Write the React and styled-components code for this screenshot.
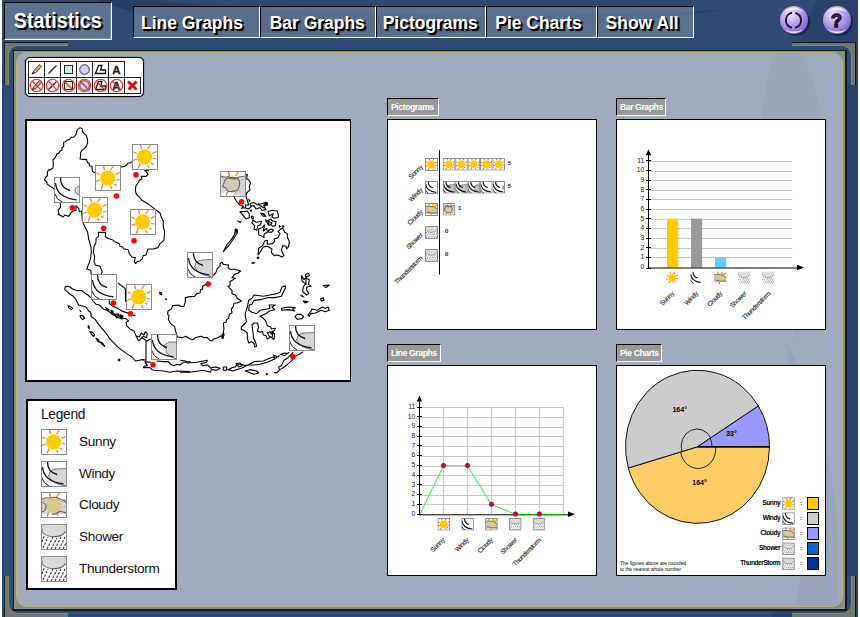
import React from 'react'
import styled, { createGlobalStyle } from 'styled-components'

const GlobalStyle = createGlobalStyle`
    body {
        margin: 0;
        background: #fff;
        font-family: "Liberation Sans", Arial, sans-serif;
        overflow: hidden;
    }
    * { box-sizing: border-box; }
    svg { display: block; }
    svg text { font-family: "Liberation Sans", Arial, sans-serif; }
`

const Page = styled.div`
    position: relative;
    width: 856px;
    height: 617px;
    margin: 0 2px;
    background: #2f4a73;
    overflow: hidden;
`
const Swoosh = styled.svg`
    position: absolute;
    top: 0;
    left: 0;
    pointer-events: none;
`
const Header = styled.div`
    position: relative;
    display: flex;
    height: 50px;
    padding: 2px 5px 0 2px;
`
const Title = styled.div`
    width: 108px;
    height: 38px;
    display: flex;
    align-items: center;
    justify-content: center;
    background: rgba(138, 154, 180, 0.5);
    border: 1px solid #000;
    border-right-color: #fff;
    border-bottom-color: #fff;
    box-shadow: inset -1px -1px 0 rgba(255, 255, 255, 0.15);
`
const Nav = styled.div`
    display: flex;
    height: 32px;
    margin: 4px 0 0 21px;
`
const NavButton = styled.button`
    width: ${(props)=>props.$width}px;
    padding: 1px ${(props)=>props.$pad || 0}px 0 0;
    display: flex;
    align-items: center;
    justify-content: center;
    background: rgba(138, 154, 180, 0.5);
    border: 1px solid #000;
    border-right-color: #fff;
    border-bottom-color: #fff;
`
const HeaderText = styled.span`
    flex: none;
    font: bold ${(props)=>props.$size}px "Liberation Sans", Arial, sans-serif;
    white-space: nowrap;
    color: #fff;
    text-shadow: 1px 1px 0 #000, 2px 2px 0 #000, 2px 2px 1px #000;
    transform: scaleX(${(props)=>props.$squeeze});
`
const RoundButtons = styled.div`
    display: flex;
    gap: 12px;
    margin: 3px 0 0 auto;
`
const Bracket = styled.div`
    position: absolute;
    width: 64px;
    height: 43px;
    ${(props)=>props.$right ? 'right: 2px;' : 'left: 2px;'}
    ${(props)=>props.$bottom ? 'top: 576px;' : 'top: 42px;'}
    border: 0 solid #0d1826;
    border-top-width: ${(props)=>props.$bottom ? 0 : 1}px;
    border-left-width: ${(props)=>props.$right ? 0 : 1}px;
    border-right-width: ${(props)=>props.$right ? 1 : 0}px;
    background: #6f7869;
    overflow: hidden;

    &::after {
        content: '';
        position: absolute;
        width: 80px;
        height: 60px;
        ${(props)=>props.$right ? 'right: 3px;' : 'left: 3px;'}
        ${(props)=>props.$bottom ? 'bottom: 5px;' : 'top: 2px;'}
        border: 1px solid #858f5e;
        border-radius: 10px;
        background: #2f4a73;
    }
`
const Frame = styled.div`
    position: relative;
    width: 834px;
    height: 561px;
    margin-left: 11px;
    padding: 1px 2px 2px;
    background: #8a8f80;
    border: 1px solid #101a28;
    border-right-width: 2px;
    border-bottom-width: 2px;
`
const Board = styled.div`
    position: relative;
    display: grid;
    grid-template-columns: 326px 209px 210px;
    height: 100%;
    padding: 4px 0 0 8px;
    background: #a0abbe;
    border: 1px solid #b5b57c;
    border-radius: 11px;
    overflow: hidden;
`
const LeftColumn = styled.div`
    position: relative;
`
const ChartColumn = styled.div`
    position: relative;
    padding-top: 41px;
    margin-left: ${(props)=>props.$offset}px;
    width: 210px;
`
const ChartLabel = styled.div`
    width: ${(props)=>props.$width}px;
    height: 18px;
    padding-left: 3px;
    background: #999;
    border: 1px solid #000;
    border-right-color: #fff;
    border-bottom-color: #fff;
    color: #fff;
    font-size: 8.6px;
    font-weight: bold;
    letter-spacing: -0.4px;
    line-height: 16px;
    white-space: nowrap;
`
const ChartPanel = styled.div`
    height: 211px;
    margin: 3px 0 ${(props)=>props.$last ? 0 : 14}px;
    background: #fff;
    border: 1px solid #000;
`
const ToolBox = styled.div`
    width: 119px;
    height: 40px;
    padding: 3px 2px;
    background: #fff;
    border: 1px solid #000;
    border-radius: 5px;
    box-shadow: 0 0 1px #000;
`
const ToolRow = styled.div`
    display: flex;
    height: 16px;
`
const ToolCell = styled.div`
    width: ${(props)=>props.$end ? 17 : 16}px;
    height: 17px;
    flex: none;
    border: 0 solid #222;
    border-top-width: 1px;
    border-left-width: 1px;
    border-right-width: ${(props)=>props.$end ? 1 : 0}px;
    border-bottom-width: ${(props)=>props.$last ? 1 : 0}px;
`
const MapPanel = styled.div`
    width: 326px;
    height: 263px;
    margin-top: 22px;
    background: #fff;
    border: 2px solid #000;
    border-right-width: 1.5px;
`
const Legend = styled.div`
    width: 151px;
    height: 191px;
    margin: 17px 0 0 1px;
    padding: 4px 0 0 13px;
    background: #fff;
    border: 2px solid #000;
    color: #111;
    line-height: 20px;
`
const LegendItem = styled.div`
    display: flex;
    align-items: center;
    gap: 12px;
    height: 31.8px;
    font-size: 13.6px;
    letter-spacing: -0.35px;
`
const LegendTitle = styled.div`
    height: 21px;
    font-size: 13.8px;
    letter-spacing: -0.3px;
`

const rays = [
    'M9.5 5 L8.5 1', 'M15.5 5 L18.5 1', 'M4.8 9.5 L1.5 8', 'M20.5 9.5 L24.5 7.5',
    'M21 14.5 L24.5 15', 'M5 15 L1 16.5', 'M8.2 19.5 L6 24.5', 'M15.5 21 L17 24', 'M19 19 L21.5 20.5',
]

function Sun({ weight }){
    return (
        <g>
            <path d={rays.join(' ')} stroke="#ff6d12" strokeWidth={1.2 * weight} fill="none" />
            <circle cx="12.7" cy="12.8" r="7.6" fill="#ffcb00" />
        </g>
    );
}

const windClouds = {
    full: 'M26 7.5 L15 8 Q8 9 8.5 13 Q6 15 9 17 Q11 23 26 25 Z',
    half: 'M26 8 L18 8 Q13 10 13 13 Q17 15 15 18 Q18 23 26 25 Z',
    dot: 'M26 9 Q21 10 21 13.5 Q21 17 26 18.5 Z',
}

function Wind({ cloud, weight }){
    return (
        <g fill="none" stroke="#111" strokeWidth={1.3 * weight}>
            {cloud && <path d={windClouds[cloud]} fill={weight > 1 ? '#c4c4c4' : '#d6d6d6'} stroke="#777" strokeWidth={weight} />}
            <path d="M6.5 1 Q6.5 11 16 13.5" />
            <path d="M1.5 6 Q3 21 22.5 22.8" />
            <path d="M1 17 Q2 22 8 25" strokeWidth={weight} />
        </g>
    );
}

const cloudBlob = 'M17 7 Q14 9 9 7 Q5 7 4 12 Q1 16 6 17 Q7 22 13 20 Q18 21 19 16 Q21 10 17 7'

function Cloud({ cloud, weight }){
    if(cloud == 'shifted'){
        return (
            <g>
                <Sun weight={weight} />
                <path d="M0 5 Q5 7 9 5.5 Q16 7 26 5 V25 H20 Q12 22 6 20 Q3 22 0 23 Z" fill="#cbcaca" fillOpacity="0.78" />
                <path d={cloudBlob} fill="#cecab4" />
                <path d={'M1 5 Q4 7 8 5.5 Q14 8 19 6 L25 5 ' + cloudBlob} fill="none" stroke="#666" strokeWidth={1.1 * weight} />
            </g>
        );
    }
    return (
        <g>
            <Sun weight={weight} />
            <path d="M0 8 Q3 5 9 6 Q15 4 19 7 Q24 8 26 12 V22 L19 22 Q14 25 9 21 Q5 23 0 22 Z" fill="#c6c4be" fillOpacity="0.72" />
            <circle cx="13" cy="13" r="7.3" fill="#d8cb8a" />
            <path d="M0 8 Q3 5 9 6 Q15 4 19 7 Q24 8 25 11 M0 10 Q6 12 5 15 Q5 19 0 20 M11 22 Q14 23 19 19 L26 21" fill="none" stroke="#666" strokeWidth={1.1 * weight} />
        </g>
    );
}

// the cloudy icon of the charts, sun in the upper right behind one wide cloud
function SmallCloud(){
    return (
        <g>
            <path d="M9 5 L7 0 M15 5 L17 0 M20 7 L25 3 M3 10 L0 8 M12 21 L11 26" stroke="#ff6d12" strokeWidth="2.4" />
            <path d="M14 3 h8 v6 h-8z" fill="#ffcb00" />
            <path d="M0 7 Q8 5 14 7 Q22 5 26 12 V22 H0 Z" fill="#c3c0b8" />
            <path d="M5 9 Q14 5 20 10 Q25 16 22 20 Q12 22 8 18 Q4 15 5 9 Z" fill="#d9cb8e" />
            <path d="M0 7 Q8 5 14 7 Q20 6 24 13 M4 18 Q12 21 25 20" fill="none" stroke="#666" strokeWidth="1.8" />
        </g>
    );
}

function Rain(){
    return (
        <g>
            <path d="M2 24 L7 13 M6 25 L12 13 M10 25 L16 14 M14 25 L20 13 M18 25 L24 13 M22 25 L26 17 M1 18 L3 12" stroke="#333" strokeWidth="1.1" strokeDasharray="2.5 1.2" fill="none" />
            <path d="M0 0 H26 V8 H24 Q22 12.5 12.5 12.8 Q5 12.5 2 8.5 L0 8 Z" fill="#dadada" />
            <path d="M1 5 V8 Q5 12.5 12.5 12.8 Q22 12.5 24 8 H26" fill="none" stroke="#666" strokeWidth="1.1" />
        </g>
    );
}

function WeatherIcon({ type, cloud, size = 26, x, y, bare }){
    const small = size < 20;
    const weight = small ? 1.8 : 1;
    return (
        <svg x={x} y={y} width={size} height={size} viewBox="0 0 26 26">
            {!bare && <rect width="26" height="26" fill="#fff" />}
            {type == 'sunny' && <Sun weight={weight} />}
            {type == 'windy' && <Wind cloud={cloud} weight={weight} />}
            {type == 'cloudy' && (small && !cloud ? <SmallCloud /> : <Cloud cloud={cloud} weight={weight} />)}
            {type == 'rain' && <Rain />}
            {!bare && <rect x={small ? 1 : 0.5} y={small ? 1 : 0.5} width={small ? 24 : 25} height={small ? 24 : 25} fill="none" stroke="#8c8c8c" strokeWidth={small ? 2 : 1} />}
        </svg>
    );
}

const weather = [
    { name: 'Sunny', type: 'sunny', value: 5 },
    { name: 'Windy', type: 'windy', value: 5, legendCloud: 'full' },
    { name: 'Cloudy', type: 'cloudy', value: 1 },
    { name: 'Shower', type: 'rain', value: 0 },
    { name: 'Thunderstorm', type: 'rain', value: 0 },
]

const tools = {
    pencil: (
        <g>
            <path d="M3 12 L5 8.5 L10.5 2.5 L12.5 4.5 L7 10.5 Z" fill="#d9a378" stroke="#333" strokeWidth="0.9" />
            <path d="M3 12 L5 10.5" stroke="#111" />
        </g>
    ),
    line: <path d="M3.5 11.5 L11.5 3.5" stroke="#222" strokeWidth="1.3" />,
    rect: <rect x="3.5" y="3.5" width="8" height="8" fill="#c9f2c9" stroke="#222" />,
    circle: <circle cx="7.5" cy="7.5" r="4.8" fill="#cfd0ee" stroke="#333" />,
    polygon: <path d="M5.5 3.5 H9 L7.5 8 H12.5 V11.5 H2.5 Z" fill="none" stroke="#111" strokeWidth="1.3" />,
    text: <text x="7.5" y="11.5" fontSize="11.5" fontWeight="bold" textAnchor="middle" fill="#222" stroke="#222" strokeWidth="0.3">A</text>,
}
const toolNames = ['pencil', 'line', 'rect', 'circle', 'polygon', 'text']

function Toolbar(){
    return (
        <ToolBox>
            <ToolRow>
                {toolNames.map((name, i)=>(
                    <ToolCell key={name} $end={i == 5}>
                        <svg width="15" height="15">{tools[name]}</svg>
                    </ToolCell>
                ))}
            </ToolRow>
            <ToolRow>
                {toolNames.map((name)=>(
                    <ToolCell key={name} $last>
                        <svg width="15" height="15">
                            {tools[name]}
                            <circle cx="7.5" cy="7.5" r="6.2" fill="none" stroke="#f22" strokeWidth="1.1" />
                            <path d="M3 3 L12 12" stroke="#f22" strokeWidth="1.1" />
                        </svg>
                    </ToolCell>
                ))}
                <ToolCell $last $end>
                    <svg width="15" height="15">
                        <path d="M3 3.5 L11.5 11.5 M11.5 3.5 L3.5 11.5" stroke="#f00000" strokeWidth="2.8" />
                    </svg>
                </ToolCell>
            </ToolRow>
        </ToolBox>
    );
}

// coast lines, each region has its own origin and is drawn at triple scale
const regions = [
    {
        name: 'indochina', x: 20, y: 115,
        lines: `M180 38 L172 44 168 58 162 66 154 67 148 74 142 75 136 80 131 82 131 94 126 98 126 106 120 108 117 114 110 118 108 124 102 132 99 135 100 150 98 160 90 165 86 164 82 172 82 182 78 186 73 195 80 200 82 208 88 212 100 220 103 225
            M180 38 L188 42 187 48 192 56 198 60 202 70 203 82 200 92 194 100 188 104 182 112 182 122 180 132 192 133 200 134 202 142 208 146 208 152 216 154 217 168 222 172 226 172
            M301 156 L312 155 320 150 324 144 330 144 336 140
            M386 167 L374 167 380 172 384 178 378 184 364 184 366 192 358 196 354 204 348 212 346 226 349 238 358 246 366 256 386 268 406 283 420 294 424 306 430 318 430 336 434 350 432 376 420 386 414 398 400 402 384 402 378 420 370 422 366 432 360 438 352 440 347 446 343 440 346 428 336 426 328 416 324 404 312 402 308 396 300 394 298 386 285 380 276 374 264 370 256 365 257 353 235 352 236 364 228 370 228 382 222 395 220 412 224 424 222 440 226 450 240 454 244 464 247 470 243 480
            M120 262 L122 276 114 286 118 300 114 298 130 306 134 300 146 304 154 292 160 288 168 286 168 272 176 280 178 290 185 288 186 304 188 322 194 334 203 352 206 372 213 396 214 410 212 430 206 448 200 462 212 466 214 478
            M294 504 L304 512 310 516 316 522 317 562 M268 556 L268 566 276 572 292 580 310 590 330 596 M338 600 l8 2`,
    },
    {
        name: 'sumatra', x: 20, y: 245,
        lines: `M136 125 L146 124 158 132 172 137 186 137 194 144 204 150 212 158 M214 162 L228 178 238 180 250 192 266 198 276 208 296 218 306 222 316 220 326 228 318 232 320 242 330 252 342 258 348 272 356 288 M136 125 L134 134 142 140 150 148 160 154 168 164 176 180 192 184 198 186 206 198 212 202 214 215 226 224 236 238 246 250 256 262 262 270 268 280 280 292 292 305 306 316 320 326 336 336 346 348 368 344 378 346 378 288
            M348 272 L358 276 364 264 372 270 376 260 382 266 380 278 370 274 356 288 M364 276 L380 288 392 282
            M374 350 L382 362 372 364 370 368 390 368 396 374 402 376 430 378 450 382 470 378 510 380
            M374 350 L394 352 M410 348 L430 350 445 350 452 358 462 362 472 358 480 360 490 352 512 350
            M144 182 l6 2 8 6 -4 4 -8 -6z M180 212 l8 0 6 8 -6 4 -6 -6z M210 260 l8 2 6 8 -4 4 -6 -8z M228 280 l6 10 4 2 -2 -8z M240 290 l6 8 8 6 -6 -10z M419 142 l6 2 0 5 -5 -1z`,
        fills: 'M272 194 l8 4 0 8 -6 -2z M286 206 l10 0 6 10 -8 -2z M300 208 l10 4 -2 8 -8 -2z M204 240 l5 5 -1 8 -4 -4z M294 342 h6 v6 h-6z M436 161 h4 v4 h-4z M178 194 l6 4 -2 3z M256 186 l12 8 -4 6z M278 204 l8 4 8 10 -4 2z',
    },
    {
        name: 'borneo', x: 180, y: 245,
        lines: `M84 112 L78 118 68 124 68 132 62 134 60 144 50 146 44 154 30 155 16 158 16 170 12 184 2 184 -4 180 -22 182 -26 192 -36 198 -37 208 -33 212 -35 224 -28 236 -16 245 -14 256 -10 268 -8 276 6 278 18 274 30 282 40 284 46 278 64 274 72 278 82 278 90 286 96 288 100 282 110 280 124 272 128 280 132 270 130 260 132 252 130 234 138 232 140 224 146 220 148 208 156 204 154 192 160 184 162 174 172 174 184 168 172 160 166 150 156 146 156 136 144 124 150 122 150 110 166 100 156 98 164 88 174 84 182 78 160 72 152 74 144 68 146 60 130 58 126 52 120 56 120 64 112 70 108 82 100 92
            M316 122 L306 126 300 142 290 146 270 150 250 154 222 150 216 160 206 166 202 186 196 205 196 216 200 230 190 240 184 246 184 254 192 256 202 264 202 280 206 294 214 290 222 296 224 306 230 304 226 290 220 280 220 270 216 240 222 234 232 234 236 246 232 258 240 262 248 260 250 270 258 272 262 282 272 276 282 284 284 266 274 262 284 256 286 250 274 252 272 246 262 242 256 226 248 218 240 214 258 206 268 198 284 194 276 186 286 180 268 180 270 190 262 192 240 196 230 206 216 202 206 196 208 180 216 178 222 166 242 164 262 158 284 158 304 154 310 142 316 130 Z
            M262 264 l8 -4 4 8 6 -8 -4 18 -8 -4z M304 190 L326 186 346 188 338 192 344 198 326 194 306 196 Z M345 215 l6 -7 12 0 8 6 -5 7 -14 2z
            M384 210 L392 200 396 192 412 196 426 186 436 190 444 186 448 196 436 200 424 196 406 204 392 206 388 214 Z
            M384 84 L376 90 378 96 388 92 386 84 M378 98 L372 104 364 92 366 108 376 116 370 126 368 140 380 150 386 146 380 134 380 126 394 124 386 118 388 104 378 98 378 120
            M430 122 L448 120 438 128 Z M422 162 L430 158 432 166 424 168 Z M370 168 L384 170 376 174 Z
            M0 346 L16 348 22 354 50 352 82 346 80 352 62 356 68 362 82 360 90 366 94 372 92 382 70 376 30 382 0 382 M94 368 L108 366 120 370 110 376 96 374 M130 366 h10 v10 h-10z
            M144 374 L156 368 166 366 170 360 186 358 194 362 204 360 184 370 158 378 Z M168 356 l12 -2 6 8 -10 4z M204 360 L222 350 250 348 268 340 280 336 284 342 262 352 240 358 222 360 Z
            M280 330 l14 6 4 -4 -12 8z M302 328 l12 -4 8 2 -8 6z M320 326 L328 322
            M196 378 L210 374 230 378 236 384 222 388 Z M282 382 L290 384 300 374 316 364 336 346 344 334 358 328 370 320 M340 322 L330 332 322 340 312 346 304 362 296 366 298 374`,
        fills: 'M214 54 l6 -3 6 3 -9 2z M231 36 h6 v5 h-6z M361 150 l8 2 4 5 -9 -3z M258 385 h5 v4 h-5z M126 266 l6 0 -2 16 -5 -2z',
    },
    {
        name: 'philippines', x: 180, y: 115,
        lines: `M196 180 L202 178 200 192 206 194 212 204 208 214 210 226 204 230 200 234 198 246 202 256 206 270 196 270 198 280 206 282 214 274 M162 246 L168 256 174 264 180 270 190 274 184 280 196 278
            M214 274 L210 266 222 262 232 270 244 266 258 262 262 270 252 272 258 284 246 286 240 278 228 282 222 272 Z M234 264 l6 8 14 8
            M180 290 L192 290 202 288 208 298 208 308 198 312 190 302 Z M218 316 L230 322 246 318 240 330 234 332 230 346 222 342 224 332 216 324 Z
            M264 290 L276 286 292 288 296 306 284 310 276 306 280 296 268 302 Z M236 342 L246 338 254 330 250 348 260 340 262 352 252 358 252 368 244 362 236 360 Z
            M262 318 L272 312 278 318 288 320 286 332 278 334 272 328 276 324 Z M266 346 l8 -4 6 4 -6 6 -8 0z M242 296 l8 0 8 8 -8 0z M214 304 l5 0 1 8 -5 -2z
            M234 420 L236 400 248 392 254 378 262 376 262 388 278 386 284 378 282 372 294 368 300 356 294 350 302 342 308 340 314 352 322 356 322 366 328 380 326 394 320 402 318 394 308 392 304 406 312 422 306 426 294 420 282 422 274 412 276 402 262 394 250 396 240 412 Z
            M130 410 L140 390 152 376 164 358 166 342 172 344 172 354 156 378 148 390 Z`,
        fills: 'M172 318 l12 2 -3 4z M205 252 l6 4 -3 4z M209 286 l6 -2 0 6z M256 312 l6 6 -4 4z M260 322 l6 0 4 10 -6 -2z M297 330 l5 4 -4 5z M306 332 h6 v5 h-5z M250 270 l6 -4 0 4z M166 342 l6 4 -4 10z M244 294 l10 4 0 5z M254 264 l9 -2 -1 8 -6 -1z',
    },
]

const stations = [
    { type: 'windy', cloud: 'dot', x: 54, y: 177, dot: [72.3, 207.7] },
    { type: 'sunny', x: 95, y: 165, dot: [116.4, 196] },
    { type: 'sunny', x: 132, y: 144, dot: [136, 174.8] },
    { type: 'sunny', x: 82, y: 197, dot: [103.6, 228.3] },
    { type: 'sunny', x: 130, y: 209, dot: [134, 240.8] },
    { type: 'cloudy', cloud: 'shifted', x: 220, y: 171, dot: [241.6, 201.7] },
    { type: 'windy', x: 91, y: 274, dot: [113.4, 303] },
    { type: 'sunny', x: 126, y: 284, dot: [130.4, 313.7] },
    { type: 'windy', cloud: 'half', x: 151, y: 334, dot: [153, 364.7] },
    { type: 'windy', cloud: 'full', x: 187, y: 252, dot: [208.2, 284] },
    { type: 'windy', cloud: 'full', x: 289, y: 325, dot: [293, 356.7] },
]

function WeatherMap(){
    return (
        <MapPanel>
            <svg width="322" height="259" viewBox="27 121 322 259">
                {regions.map((r)=>(
                    <g key={r.name} transform={`translate(${r.x} ${r.y}) scale(0.3333)`}>
                        <path d={r.lines} fill="none" stroke="#000" strokeWidth="3.3" strokeLinejoin="round" />
                        {r.fills && <path d={r.fills} stroke="#000" strokeWidth="1.5" />}
                    </g>
                ))}
                {stations.map((s, i)=>(
                    <g key={i}>
                        <WeatherIcon type={s.type} cloud={s.cloud} x={s.x} y={s.y} />
                        <circle cx={s.dot[0]} cy={s.dot[1]} r="2.8" fill="#f00" />
                    </g>
                ))}
            </svg>
        </MapPanel>
    );
}

function SlantLabel({ x, y, children }){
    return (
        <text transform={`translate(${x} ${y}) rotate(-45)`} textAnchor="end" fontSize="6.5" letterSpacing="-0.3" fill="#222" stroke="#222" strokeWidth="0.12">{children}</text>
    );
}

function Pictogram(){
    const rowY = [63, 86, 108, 131, 154];
    const clouds = ['full', 'full', 'half', undefined, 'dot'];
    return (
        <svg width="208" height="209" viewBox="8 25 208 209">
            {weather.map((w, i)=>(
                <g key={w.name}>
                    <SlantLabel x={43} y={rowY[i] + 9.5}>{w.name}</SlantLabel>
                    <WeatherIcon type={w.type} size={13} x={45} y={rowY[i]} />
                    {Array.from({ length: w.value }, (_, k)=>(
                        <WeatherIcon key={k} type={w.type} size={12.6} x={62.8 + k * 12.4} y={rowY[i]}
                            cloud={w.type == 'windy' ? clouds[k] : w.type == 'cloudy' ? 'shifted' : undefined} />
                    ))}
                    <text x={w.value == 0 ? 65 : 65.5 + w.value * 12.45} y={rowY[i] + 7.3} fontSize="6" fontWeight="bold" fill="#222">{w.value}</text>
                </g>
            ))}
            <path d="M59.5 55 V179.5" stroke="#000" />
        </svg>
    );
}

const levels = [0, 1, 2, 3, 4, 5, 6, 7, 8, 9, 10, 11]

// level 0 lies on the x axis, base is its y
function Axes({ x, base, step }){
    const top = base - 11 * step - 7;
    return (
        <g>
            {levels.map((n)=>(
                <g key={n}>
                    <path d={`M${x - 2.5} ${Math.round(base - n * step) + 0.5 - (n ? 1 : 0)} h5`} stroke="#000" />
                    <text x={x - 4.5} y={base - n * step + 1.3} fontSize="6.8" textAnchor="end" fill="#222" letterSpacing="-0.2">{n}</text>
                </g>
            ))}
            <path d={`M${x} ${top} V${base + 0.5} H${x + 150}`} fill="none" stroke="#000" />
            <path d={`M${x} ${top - 5} l2.7 6 h-5.4z M${x + 155.5} ${base} l-7 -2.7 v5.4z`} />
        </g>
    );
}

const barColors = ['#ffcb00', '#999', '#66ccff', '#999', '#999']

function BarGraph(){
    return (
        <svg width="208" height="209" viewBox="7 25 208 209">
            {levels.slice(1).map((n)=>(
                <path key={n} d={`M39 ${Math.round(172 - n * 9.65) + 0.5} H182.5`} stroke="#c8c8c8" />
            ))}
            {weather.map((w, i)=>(
                <g key={w.name}>
                    {w.value > 0 && <rect x={57 + i * 24} y={w.value == 5 ? 123.6 : 162.2} width="11.2" height={w.value == 5 ? 49 : 10.3} fill={barColors[i]} />}
                    <WeatherIcon bare type={w.type} size={12.5} x={56 + i * 24} y={176.5} />
                    <SlantLabel x={64.5 + i * 24.1} y={199}>{w.name}</SlantLabel>
                </g>
            ))}
            <Axes x={38.5} base={172.5} step={9.65} />
        </svg>
    );
}

function LineGraph(){
    const points = weather.map((w, i)=>[63.5 + i * 24, 174.3 - w.value * 9.7]);
    const line = 'M40 174 ' + points.map((p)=>`L${p[0]} ${p[1]}`).join(' ') + ' H183';
    return (
        <svg width="208" height="209" viewBox="8 26 208 209">
            {levels.slice(1).map((n)=>(
                <path key={n} d={`M40 ${Math.round(174 - n * 9.7) + 0.5} H184`} stroke="#c8c8c8" />
            ))}
            {[0, 1, 2, 3, 4, 5].map((n)=>(
                <path key={n} d={`M${63.5 + n * 24} 67.3 V174`} stroke="#c8c8c8" />
            ))}
            <Axes x={39.5} base={174.3} step={9.7} />
            <path d={line} fill="none" stroke="#4df04d" strokeWidth="1.1" />
            <path d="M136 174.5 H183" stroke="#00b000" strokeWidth="1" />
            {points.map((p, i)=>(
                <circle key={i} cx={p[0]} cy={p[1] - 0.3} r="2.2" fill="#d4003c" stroke="#8c0022" strokeWidth="0.6" />
            ))}
            {weather.map((w, i)=>(
                <g key={w.name}>
                    <WeatherIcon type={w.type} size={12.6} x={57.5 + i * 23.8} y={178} />
                    <SlantLabel x={65 + i * 24.1} y={200.5}>{w.name}</SlantLabel>
                </g>
            ))}
        </svg>
    );
}

const pieColors = ['#ffcb00', '#ccc', '#99f', '#0066cc', '#003399']

function PieChart(){
    return (
        <svg width="208" height="209" viewBox="7 26 208 209">
            <g stroke="#111" strokeWidth="1">
                <path d="M87.5 106.8 L159.5 106.8 A72 76.5 0 0 1 18.3 128 Z" fill="#ffcc66" />
                <path d="M87.5 106.8 L18.3 128 A72 76.5 0 0 1 148.4 66 Z" fill="#ccc" />
                <path d="M87.5 106.8 L148.4 66 A72 76.5 0 0 1 159.5 106.8 Z" fill="#99f" />
            </g>
            <path d="M88 106.9 H159.5" stroke="#000" strokeWidth="1.3" />
            <g fill="none" stroke="#111" strokeWidth="0.9">
                <path d="M71.9 111.7 A15.8 17.5 0 0 1 100.8 98" />
                <path d="M100.3 98.5 Q102 102 102 106.8" />
                <path d="M105.5 106.8 A17.5 19 0 0 1 70.7 112" />
            </g>
            <g fontSize="7" fontWeight="bold" textAnchor="middle">
                <text x="69.7" y="72">164°</text>
                <text x="121.5" y="96">33°</text>
                <text x="89.5" y="145">164°</text>
            </g>
            {weather.map((w, i)=>(
                <g key={w.name}>
                    <text x="170.2" y={165.3 + i * 15} fontSize="6.6" fontWeight="bold" letterSpacing="-0.45" textAnchor="end">{i == 4 ? 'ThunderStorm' : w.name}</text>
                    <WeatherIcon type={w.type} size={12.6} x={172.2} y={157.2 + i * 15.1} />
                    <text x="190" y={165.3 + i * 15} fontSize="6" fontWeight="bold">:</text>
                    <rect x="197.5" y={157.5 + i * 15} width="11" height="12" fill={pieColors[i]} stroke="#000" />
                </g>
            ))}
            <g fontSize="5.6">
                <text x="10" y="224.7" textLength="66" lengthAdjust="spacingAndGlyphs">The figures above are rounded</text>
                <text x="10" y="230.8" textLength="61" lengthAdjust="spacingAndGlyphs">to the nearest whole number</text>
            </g>
        </svg>
    );
}

function RoundButton({ help }){
    return (
        <svg width="31" height="33" viewBox="0 0 31 33">
            <defs>
                <radialGradient id="orb" cx="0.38" cy="0.3" r="0.75">
                    <stop offset="0" stopColor="#efe6ff" />
                    <stop offset="0.45" stopColor="#bca6ec" />
                    <stop offset="1" stopColor="#7c60c4" />
                </radialGradient>
            </defs>
            <circle cx="17" cy="17" r="14" fill="#101c50" opacity="0.75" />
            <circle cx="15" cy="15" r="14" fill="url(#orb)" />
            <path d="M5.5 7 A12.5 12.5 0 0 1 24.5 7 Q15 3 5.5 7Z M6 24.5 A12.5 12.5 0 0 0 24 24.5 Q15 28.5 6 24.5Z" fill="#fff" opacity="0.75" />
            {help
                ? <text x="14.5" y="21.5" fontSize="18" fontWeight="bold" textAnchor="middle" fill="#4b2b7c" stroke="#160a2c" strokeWidth="1.3">?</text>
                : <circle cx="14.5" cy="15.3" r="7.6" fill="none" stroke="#1d1638" strokeWidth="2" strokeDasharray="20.6 3.27" strokeDashoffset="10.3" />}
        </svg>
    );
}

const navItems = [
    { name: 'Line Graphs', width: 127, pad: 10 },
    { name: 'Bar Graphs', width: 116, pad: 1 },
    { name: 'Pictograms', width: 110, pad: 2 },
    { name: 'Pie Charts', width: 111, pad: 6 },
    { name: 'Show All', width: 97, pad: 6 },
]

function App(){
    return (
        <Page>
            <GlobalStyle />
            <Swoosh width="856" height="617">
                <path d="M95 0 Q200 42 430 34 Q620 26 720 10 Q560 18 400 14 Q240 10 150 0Z" fill="#1f3050" opacity="0.4" />
                <path d="M815 0 Q760 100 770 617 H856 V0Z" fill="#1f3556" opacity="0.3" />
            </Swoosh>
            <Bracket />
            <Bracket $right />
            <Bracket $bottom />
            <Bracket $right $bottom />
            <Header>
                <Title><HeaderText $size={21.5} $squeeze={0.92}>Statistics</HeaderText></Title>
                <Nav>
                    {navItems.map((item)=>(
                        <NavButton key={item.name} $width={item.width} $pad={item.pad}>
                            <HeaderText $size={19.2} $squeeze={0.91}>{item.name}</HeaderText>
                        </NavButton>
                    ))}
                </Nav>
                <RoundButtons>
                    <RoundButton />
                    <RoundButton help />
                </RoundButtons>
            </Header>
            <Frame>
                <Board>
                    <Swoosh width="826" height="556">
                        <path d="M770 0 H784 Q830 80 780 290 Q765 210 742 90 Q745 40 758 0Z" fill="#96a0a8" opacity="0.35" />
                        <path d="M768 286 Q830 400 820 556 H778 Q800 450 768 286Z" fill="#8f9caa" opacity="0.3" />
                    </Swoosh>
                    <LeftColumn>
                        <Toolbar />
                        <WeatherMap />
                        <Legend>
                            <LegendTitle>Legend</LegendTitle>
                            {weather.map((w)=>(
                                <LegendItem key={w.name}>
                                    <WeatherIcon type={w.type} cloud={w.legendCloud} />
                                    {w.name}
                                </LegendItem>
                            ))}
                        </Legend>
                    </LeftColumn>
                    <ChartColumn $offset={36}>
                        <ChartLabel $width={52}>Pictograms</ChartLabel>
                        <ChartPanel><Pictogram /></ChartPanel>
                        <ChartLabel $width={54}>Line Graphs</ChartLabel>
                        <ChartPanel $last><LineGraph /></ChartPanel>
                    </ChartColumn>
                    <ChartColumn $offset={56}>
                        <ChartLabel $width={50}>Bar Graphs</ChartLabel>
                        <ChartPanel><BarGraph /></ChartPanel>
                        <ChartLabel $width={46}>Pie Charts</ChartLabel>
                        <ChartPanel $last><PieChart /></ChartPanel>
                    </ChartColumn>
                </Board>
            </Frame>
        </Page>
    );
}

export default App;
